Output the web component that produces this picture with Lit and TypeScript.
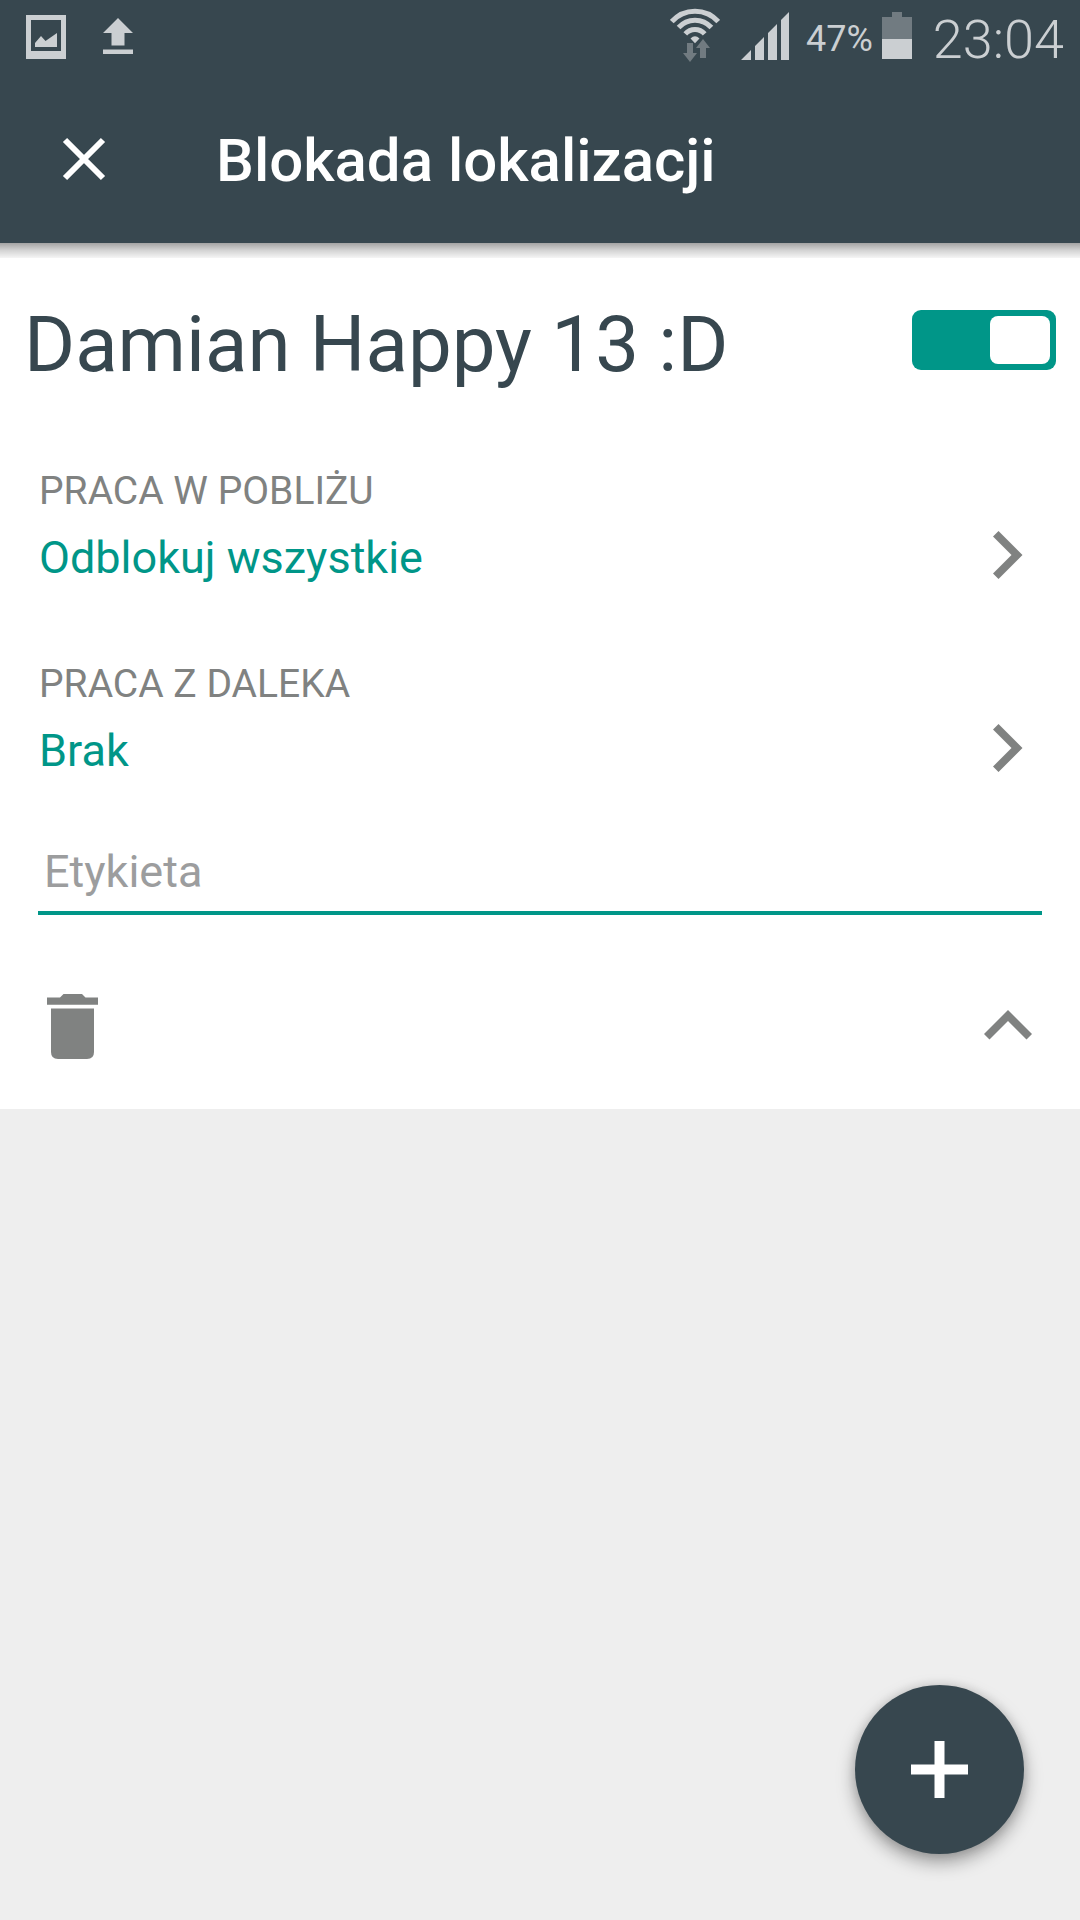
import { LitElement, html, css } from "lit";
import { customElement, property, state } from "lit/decorators.js";

const reset = css`
  * {
    box-sizing: border-box;
  }
  svg {
    display: block;
    flex: none;
  }
  button {
    margin: 0;
    padding: 0;
    border: 0;
    background: none;
    color: inherit;
    font: inherit;
    text-align: left;
    cursor: pointer;
  }
`;

@customElement("status-bar")
class StatusBar extends LitElement {
  static styles = [
    reset,
    css`
      :host {
        display: flex;
        align-items: center;
        justify-content: space-between;
        height: 75px;
        padding: 3px 16px 0 26px;
        color: #cbcfd2;
      }
      .group {
        display: flex;
        align-items: center;
      }
      .notices {
        gap: 37px;
      }
      .signals {
        gap: 21px;
      }
      .charge {
        display: flex;
        align-items: center;
        gap: 9px;
        margin-left: -4px;
        font-size: 36px;
      }
      .clock {
        font-size: 54px;
        font-weight: 350;
      }
      .bright {
        fill: #cbcfd2;
      }
      .dim {
        fill: #717b81;
      }
      .arc {
        fill: none;
        stroke: #cbcfd2;
        stroke-width: 5;
      }
    `,
  ];

  render() {
    return html`
      <div class="group notices">
        <svg width="40" height="72" viewBox="0 3 40 72" aria-hidden="true">
          <path class="bright" fill-rule="evenodd" d="M0 15H40V59H0ZM5 20V51H35V20Z" />
          <path class="bright" d="M9 47V43L15 36L19.500 41L31 33V47Z" />
        </svg>
        <svg width="30" height="72" viewBox="0 3 30 72" aria-hidden="true">
          <path class="bright" d="M15 18L30 33H21.500V45.500H8.500V33H0ZM0 49.500H30V54H0Z" />
        </svg>
      </div>
      <div class="group signals">
        <svg width="50" height="72" viewBox="0 3 50 72" aria-hidden="true">
          <path class="arc" d="M1.800 21.500A31.200 31.200 0 0 1 48.200 21.500" />
          <path class="arc" d="M8.600 27.500A22 22 0 0 1 41.400 27.500" />
          <path class="arc" d="M15.300 33.800A13 13 0 0 1 34.700 33.800" />
          <path class="bright" d="M20.500 38.500Q25 34 29.500 38.500L25 43.200Z" />
          <path class="dim" d="M17 43H23V53H27L20 62L13 53H17ZM30 58V48H26L33 39L40 48H36V58Z" />
        </svg>
        <svg width="48" height="72" viewBox="0 3 48 72" aria-hidden="true">
          <path class="bright" d="M0 60L10 50V60ZM14 60V46L23 37V60ZM27 60V33L36 24V60ZM40 60V20L48 12V60Z" />
        </svg>
        <div class="charge">
          <span>47%</span>
          <svg width="30" height="72" viewBox="0 3 30 72" aria-hidden="true">
            <path class="dim" d="M10 12H20V17H30V39H0V17H10Z" />
            <path class="bright" d="M0 39H30V59H0Z" />
          </svg>
        </div>
        <span class="clock">23:04</span>
      </div>
    `;
  }
}

@customElement("rule-row")
class RuleRow extends LitElement {
  @property() label = "";
  @property() value = "";

  static styles = [
    reset,
    css`
      :host {
        display: block;
      }
      .row {
        display: flex;
        flex-direction: column;
        gap: 4px;
        width: 100%;
      }
      .label {
        color: #808281;
        font-size: 39px;
        line-height: 60px;
      }
      .line {
        display: flex;
        align-items: center;
        justify-content: space-between;
        width: 100%;
      }
      .value {
        color: #009688;
        font-size: 45px;
        line-height: 66px;
      }
      .chevron {
        fill: #808281;
      }
    `,
  ];

  render() {
    return html`
      <button class="row" type="button">
        <span class="label">${this.label}</span>
        <span class="line">
          <span class="value">${this.value}</span>
          <svg width="72" height="66" viewBox="0 0 72 66" aria-hidden="true">
            <path class="chevron" d="M28.500 6L52.500 30L28.500 54L23 48.500L41.500 30L23 11.500Z" />
          </svg>
        </span>
      </button>
    `;
  }
}

@customElement("device-card")
class DeviceCard extends LitElement {
  @property() name = "";
  @state() private enabled = true;
  private rules = [
    { label: "PRACA W POBLIŻU", value: "Odblokuj wszystkie" },
    { label: "PRACA Z DALEKA", value: "Brak" },
  ];

  static styles = [
    reset,
    css`
      :host {
        display: block;
        padding: 53px 0 35px;
        background: #fff;
      }
      .head {
        display: flex;
        align-items: flex-start;
        justify-content: space-between;
        padding: 0 24px;
      }
      .name {
        margin: 0;
        color: #37474f;
        font-size: 78px;
        font-weight: 400;
        line-height: 98px;
      }
      .toggle {
        display: flex;
        align-items: center;
        height: 88px;
      }
      .switch {
        display: flex;
        appearance: none;
        width: 144px;
        height: 60px;
        margin: 0;
        padding: 6px;
        border-radius: 9px;
        background: #9e9e9e;
        cursor: pointer;
      }
      .switch::before {
        content: "";
        width: 60px;
        border-radius: 8px;
        background: #fff;
      }
      .switch:checked {
        justify-content: flex-end;
        background: #009688;
      }
      .body {
        padding: 67px 38px 0;
      }
      .rules {
        display: flex;
        flex-direction: column;
        gap: 63px;
        padding-left: 1px;
      }
      .field {
        display: block;
        width: 100%;
        height: 84px;
        margin: 47px 0 63px;
        padding: 0 6px;
        border: 0;
        border-bottom: 4px solid #009688;
        border-radius: 0;
        outline: 0;
        background: none;
        color: #37474f;
        font: inherit;
        font-size: 45px;
      }
      .field::placeholder {
        color: #9c9d9e;
        opacity: 1;
      }
      .actions {
        display: flex;
        align-items: center;
        justify-content: space-between;
        height: 96px;
      }
      .glyph {
        fill: #808281;
      }
    `,
  ];

  render() {
    return html`
      <div class="head">
        <h2 class="name">${this.name}</h2>
        <label class="toggle">
          <input
            class="switch"
            type="checkbox"
            role="switch"
            aria-label=${this.name}
            .checked=${this.enabled}
            @change=${(e: Event) => (this.enabled = (e.target as HTMLInputElement).checked)}
          />
        </label>
      </div>
      <div class="body">
        <div class="rules">
          ${this.rules.map((r) => html`<rule-row .label=${r.label} .value=${r.value}></rule-row>`)}
        </div>
        <input class="field" type="text" placeholder="Etykieta" aria-label="Etykieta" />
        <div class="actions">
          <button type="button" aria-label="Usuń">
            <svg width="72" height="72" viewBox="0 0 72 72">
              <path class="glyph" d="M9 7.500H22L25.500 4H44L47.500 7.500H60V14.700H9ZM13 18.500H56V62Q56 69 49 69H20Q13 69 13 62Z" />
            </svg>
          </button>
          <button type="button" aria-label="Zwiń">
            <svg width="72" height="72" viewBox="0 0 72 72">
              <path class="glyph" d="M38 20L62 44L56.500 49.500L38 31L19.500 49.500L14 44Z" />
            </svg>
          </button>
        </div>
      </div>
    `;
  }
}

@customElement("app-root")
class AppRoot extends LitElement {
  static styles = [
    reset,
    css`
      :host {
        display: flex;
        flex-direction: column;
        min-height: 100vh;
        background: #eeeeee;
        font-family: Roboto, "Noto Sans", sans-serif;
      }
      .top {
        position: relative;
        background: #37474f;
      }
      .top::after {
        content: "";
        position: absolute;
        top: 100%;
        left: 0;
        right: 0;
        height: 15px;
        background: linear-gradient(rgba(0, 0, 0, 0.36), rgba(0, 0, 0, 0.17) 50%, rgba(0, 0, 0, 0.04));
      }
      .bar {
        display: flex;
        align-items: center;
        gap: 84px;
        height: 168px;
        padding: 0 36px;
        color: #fff;
      }
      .title {
        margin: 0;
        padding-top: 4px;
        font-size: 60px;
        font-weight: 500;
        line-height: 72px;
      }
      .cross {
        fill: none;
        stroke: #fff;
        stroke-width: 6;
      }
      .add {
        position: fixed;
        right: 56px;
        bottom: 66px;
        display: flex;
        align-items: center;
        justify-content: center;
        width: 169px;
        height: 169px;
        border-radius: 50%;
        background: #37474f;
        box-shadow: 0 8px 18px rgba(0, 0, 0, 0.36), 0 0 12px rgba(0, 0, 0, 0.12);
      }
      .plus {
        fill: #fff;
      }
    `,
  ];

  render() {
    return html`
      <header class="top">
        <status-bar></status-bar>
        <div class="bar">
          <button type="button" aria-label="Zamknij">
            <svg width="96" height="96" viewBox="0 0 96 96">
              <path class="cross" d="M29 29L67 67M67 29L29 67" />
            </svg>
          </button>
          <h1 class="title">Blokada lokalizacji</h1>
        </div>
      </header>
      <main>
        <device-card name="Damian Happy 13 :D"></device-card>
      </main>
      <button class="add" type="button" aria-label="Dodaj">
        <svg width="57" height="57" viewBox="0 0 57 57">
          <path class="plus" d="M23.500 0H33.500V23.500H57V33.500H33.500V57H23.500V33.500H0V23.500H23.500Z" />
        </svg>
      </button>
    `;
  }
}
